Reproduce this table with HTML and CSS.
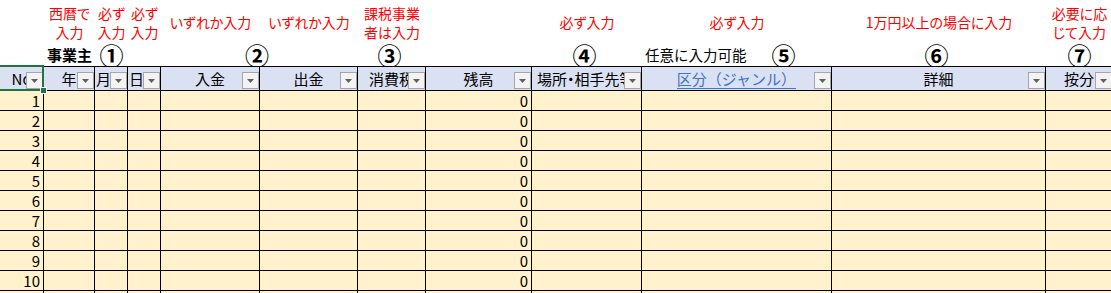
FILE: index.html
```html
<!DOCTYPE html>
<html lang="ja">
<head>
<meta charset="utf-8">
<title>事業主 帳簿</title>
<link rel="stylesheet" href="styles.css">
</head>
<body>
<div class="sheet">
  <div class="row notes">
    <div></div>
    <div class="note">西暦で<br>入力</div>
    <div class="note">必ず<br>入力</div>
    <div class="note">必ず<br>入力</div>
    <div class="note">いずれか入力</div>
    <div class="note">いずれか入力</div>
    <div class="note">課税事業<br>者は入力</div>
    <div></div>
    <div class="note">必ず入力</div>
    <div class="note">必ず入力</div>
    <div class="note">1万円以上の場合に入力</div>
    <div class="note">必要に応<br>じて入力</div>
  </div>
  <div class="row marks">
    <div></div>
    <div class="owner">事業主</div>
    <div class="mark">①</div>
    <div></div>
    <div class="mark span2 shift">②</div>
    <div class="mark shift">③</div>
    <div></div>
    <div class="mark shift">④</div>
    <div class="optional"><span class="opt-text">任意に入力可能</span><span class="mark inline">⑤</span></div>
    <div class="mark shift">⑥</div>
    <div class="mark">⑦</div>
  </div>
  <div class="row head">
    <div class="hc"><span class="ht">No</span><i class="dd"></i><span class="sel"></span><span class="handle"></span></div>
    <div class="hc"><span class="ht">年</span><i class="dd"></i></div>
    <div class="hc fit"><span class="ht">月</span><i class="dd"></i></div>
    <div class="hc fit"><span class="ht">日</span><i class="dd"></i></div>
    <div class="hc"><span class="ht">入金</span><i class="dd"></i></div>
    <div class="hc"><span class="ht">出金</span><i class="dd"></i></div>
    <div class="hc"><span class="ht">消費税</span><i class="dd"></i></div>
    <div class="hc"><span class="ht">残高</span><i class="dd"></i></div>
    <div class="hc left"><span class="ht tight">場所・相手先等</span><i class="dd"></i></div>
    <div class="hc"><span class="ht link">区分（ジャンル）</span><i class="dd"></i></div>
    <div class="hc"><span class="ht">詳細</span><i class="dd"></i></div>
    <div class="hc"><span class="ht">按分</span><i class="dd"></i></div>
  </div>
  <div class="row data"><div class="num">1</div><div></div><div></div><div></div><div></div><div></div><div></div><div class="num">0</div><div></div><div></div><div></div><div></div></div>
  <div class="row data"><div class="num">2</div><div></div><div></div><div></div><div></div><div></div><div></div><div class="num">0</div><div></div><div></div><div></div><div></div></div>
  <div class="row data"><div class="num">3</div><div></div><div></div><div></div><div></div><div></div><div></div><div class="num">0</div><div></div><div></div><div></div><div></div></div>
  <div class="row data"><div class="num">4</div><div></div><div></div><div></div><div></div><div></div><div></div><div class="num">0</div><div></div><div></div><div></div><div></div></div>
  <div class="row data"><div class="num">5</div><div></div><div></div><div></div><div></div><div></div><div></div><div class="num">0</div><div></div><div></div><div></div><div></div></div>
  <div class="row data"><div class="num">6</div><div></div><div></div><div></div><div></div><div></div><div></div><div class="num">0</div><div></div><div></div><div></div><div></div></div>
  <div class="row data"><div class="num">7</div><div></div><div></div><div></div><div></div><div></div><div></div><div class="num">0</div><div></div><div></div><div></div><div></div></div>
  <div class="row data"><div class="num">8</div><div></div><div></div><div></div><div></div><div></div><div></div><div class="num">0</div><div></div><div></div><div></div><div></div></div>
  <div class="row data"><div class="num">9</div><div></div><div></div><div></div><div></div><div></div><div></div><div class="num">0</div><div></div><div></div><div></div><div></div></div>
  <div class="row data"><div class="num">10</div><div></div><div></div><div></div><div></div><div></div><div></div><div class="num">0</div><div></div><div></div><div></div><div></div></div>
  <div class="row data"><div></div><div></div><div></div><div></div><div></div><div></div><div></div><div></div><div></div><div></div><div></div><div></div></div>
</div>
</body>
</html>
```

FILE: styles.css
```css
* { box-sizing: border-box; }

html, body {
  margin: 0;
  padding: 0;
  background: #ffffff;
}

body {
  width: 1111px;
  height: 293px;
  overflow: hidden;
  font-family: "Noto Sans CJK JP", "Noto Sans", sans-serif;
  color: #000;
}

.sheet {
  width: 1113px;
}

.row {
  display: grid;
  grid-template-columns: 44px 51px 33px 33px 99px 98px 68px 106px 110px 190px 214px 67px;
}

/* annotation row */
.notes {
  height: 45px;
}

.note {
  display: flex;
  align-items: center;
  justify-content: center;
  text-align: center;
  color: #ff0000;
  font-size: 14px;
  line-height: 19px;
  white-space: nowrap;
  font-feature-settings: "palt";
}

/* circled numbers row */
.marks {
  height: 21px;
  align-items: start;
}

.mark {
  font-size: 24px;
  font-weight: 700;
  line-height: 20px;
  text-align: center;
  white-space: nowrap;
}

.span2 {
  grid-column: span 2;
}

.shift {
  padding-right: 5px;
}

.owner {
  font-size: 15px;
  font-weight: 700;
  line-height: 20px;
  padding-left: 3px;
  white-space: nowrap;
}

.optional {
  display: flex;
  align-items: flex-start;
  padding-left: 3px;
  white-space: nowrap;
}

.opt-text {
  font-size: 14.5px;
  line-height: 20px;
}

.mark.inline {
  margin-left: 25px;
}

/* header row */
.head {
  height: 25px;
}

.hc {
  position: relative;
  display: flex;
  align-items: center;
  justify-content: center;
  background: #d9e1f2;
  border-top: 1px solid #000;
  border-bottom: 1px solid #000;
  border-right: 1px solid #000;
  font-size: 15px;
  line-height: 23px;
  white-space: nowrap;
}

.hc.fit {
  justify-content: flex-end;
  padding-right: 16px;
}

.hc.left {
  justify-content: flex-start;
  padding-left: 5px;
}

.ht {
  min-width: 0;
  overflow: hidden;
}

.tight {
  font-feature-settings: "palt";
}

.link {
  color: #4472c4;
  text-decoration: underline;
  text-underline-offset: 3px;
}

.dd {
  position: absolute;
  right: 0;
  bottom: 1px;
  width: 17px;
  height: 17px;
  border: 1px solid #a6a6a6;
  background: #f3f3f3;
}

.dd::after {
  content: "";
  position: absolute;
  left: 4px;
  top: 6px;
  width: 7px;
  height: 4px;
  background: #606060;
  clip-path: polygon(0 0, 100% 0, 50% 100%);
}

.sel {
  position: absolute;
  top: -2px;
  left: -2px;
  right: -1px;
  bottom: -1px;
  border: 2px solid #217346;
  z-index: 2;
}

.handle {
  position: absolute;
  right: -4px;
  bottom: -4px;
  width: 7px;
  height: 7px;
  background: #217346;
  border: 1px solid #ffffff;
  z-index: 3;
}

/* data rows */
.data {
  height: 20px;
}

.data > div {
  background: #fff2cc;
  border-right: 1px solid #000;
  border-bottom: 1px solid #000;
  font-size: 15px;
  line-height: 19px;
}

.data > .num {
  text-align: right;
  padding-right: 3px;
}
```
